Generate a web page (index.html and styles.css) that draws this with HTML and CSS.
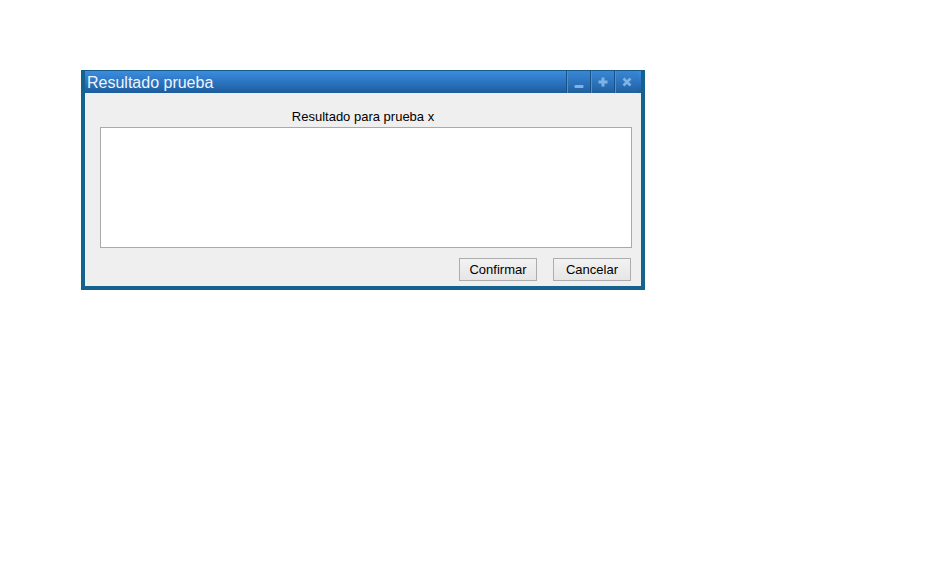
FILE: index.html
```html
<!DOCTYPE html>
<html>
<head>
<meta charset="utf-8">
<link rel="stylesheet" href="styles.css">
</head>
<body>
<div class="window">
  <div class="titlebar">
    <span class="title">Resultado prueba</span>
    <div class="tb-buttons">
      <div class="tb-btn"><svg width="10" height="10" viewBox="0 0 10 10"><rect x="0.5" y="6" width="9" height="3" rx="1" fill="#7fb3e6"/></svg></div>
      <div class="tb-btn"><svg width="10" height="10" viewBox="0 0 10 10"><path d="M3.5 0.5h3v3h3v3h-3v3h-3v-3h-3v-3h3z" fill="#7fb3e6"/></svg></div>
      <div class="tb-btn"><svg width="10" height="10" viewBox="0 0 10 10"><path d="M1.5 1.5L8.5 8.5M8.5 1.5L1.5 8.5" stroke="#7fb3e6" stroke-width="2.6"/></svg></div>
    </div>
  </div>
  <div class="content">
    <div class="label">Resultado para prueba x</div>
    <div class="textbox"></div>
    <div class="actions">
      <button class="btn">Confirmar</button>
      <button class="btn">Cancelar</button>
    </div>
  </div>
</div>
</body>
</html>
```

FILE: styles.css
```css
html, body {
  margin: 0;
  padding: 0;
  background: #ffffff;
}
body {
  font-family: "Liberation Sans", Arial, sans-serif;
  padding: 70px 0 0 81px;
}
.window {
  width: 556px;
  border: 4px solid #14628e;
  border-top: 1px solid #155a8a;
  background: #efefef;
}
.titlebar {
  height: 22px;
  display: flex;
  align-items: center;
  justify-content: space-between;
  background: linear-gradient(#3b8ddf, #2a72bf 55%, #1d5c9a);
}
.title {
  color: #eef4fc;
  font-size: 16px;
  padding-left: 2px;
  line-height: 22px;
  padding-top: 1px;
}
.tb-buttons {
  display: flex;
  height: 22px;
  margin-right: 3px;
}
.tb-btn {
  width: 23px;
  height: 22px;
  display: flex;
  align-items: center;
  justify-content: center;
  border-left: 1px solid #1b5286;
  box-shadow: inset 1px 0 0 #4a92d6;
  background: linear-gradient(#3a86d4, #2b72bb 55%, #225f9c);
}
.tb-btn:first-child svg {
  margin-top: 3px;
}
.content {
  height: 193px;
  display: flex;
  flex-direction: column;
  box-sizing: border-box;
  padding: 16px 9px 0 15px;
}
.label {
  font-size: 13px;
  text-align: center;
  color: #000;
  line-height: 15px;
  margin-bottom: 3px;
  padding-right: 6px;
}
.textbox {
  height: 119px;
  background: #fff;
  border: 1px solid #a9a9a9;
}
.actions {
  display: flex;
  justify-content: flex-end;
  gap: 16px;
  margin-top: 10px;
  padding-right: 1px;
}
.btn {
  width: 78px;
  height: 23px;
  box-sizing: border-box;
  font-family: "Liberation Sans", Arial, sans-serif;
  font-size: 13px;
  color: #000;
  border: 1px solid #adadad;
  background: linear-gradient(#f2f2f2, #e6e6e6);
  padding: 0;
  border-radius: 0;
}
```
